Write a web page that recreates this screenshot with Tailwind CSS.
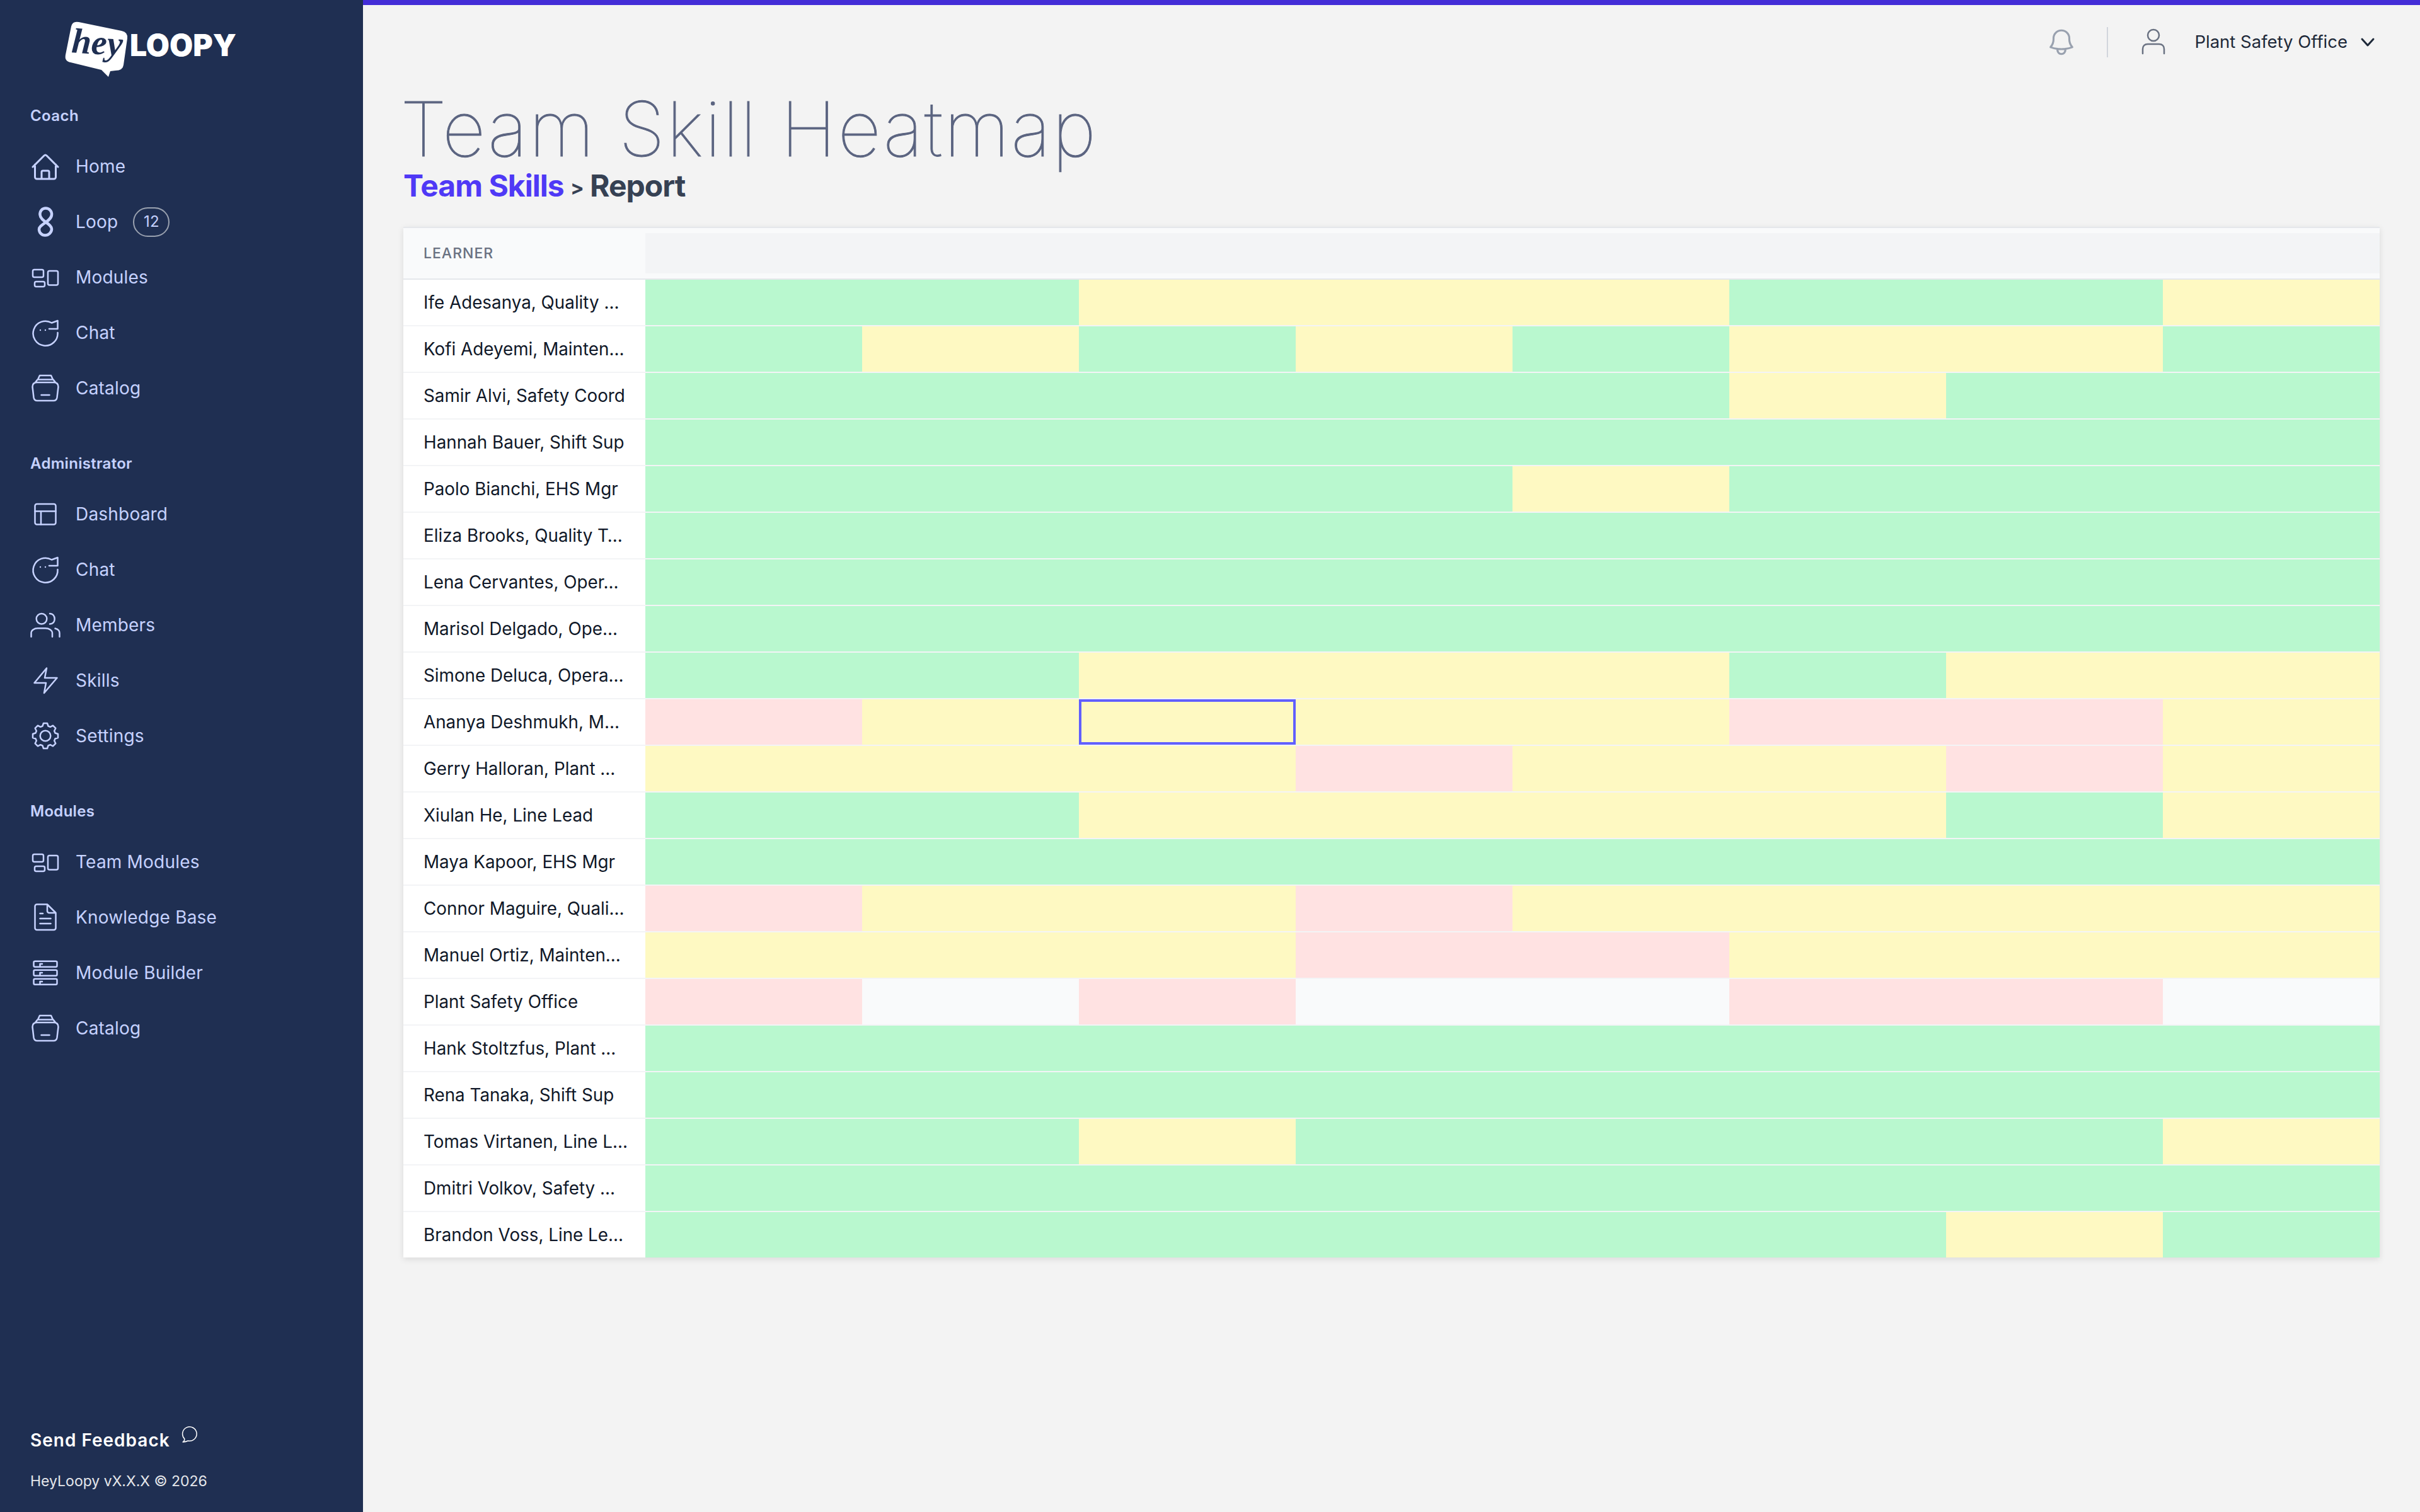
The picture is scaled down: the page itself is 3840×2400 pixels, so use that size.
<!DOCTYPE html>
<html lang="en">
<head>
    <meta charset="UTF-8">
    <title>Team Skill Heatmap</title>
    <script src="https://cdn.jsdelivr.net/npm/@tailwindcss/browser@4"></script>
</head>
<body class="bg-[#f3f3f3] [font-family:Inter,sans-serif] text-gray-800">
<div class="flex h-[2400px] w-[3840px] overflow-hidden">

    <!-- Sidebar -->
    <aside class="flex h-full w-[576px] shrink-0 flex-col bg-[#1f2f52] px-12 text-indigo-200">
        <!-- Logo -->
        <div class="relative ml-[47px] mt-[25px] h-[105px] w-[290px] shrink-0">
            <svg class="h-[105px] w-[120px]" viewBox="0 0 120 105" fill="#fff">
                <path d="M30 10 L98 24 Q108 26 107 36 L101 78 Q100 87 88 87 L80 88 L77 97 L66 86 L17 74 Q7 72 9 62 L18 17 Q20 8 30 10 Z"/>
            </svg>
            <span class="absolute left-[19px] top-[2px] rotate-[4deg] [font-family:'Liberation_Serif',serif] text-[56px] font-bold italic leading-[80px] text-[#1f2f52]">hey</span>
            <span class="absolute left-[111px] top-[21px] text-[48px] font-black leading-[52px] text-white">LOOPY</span>
        </div>

        <div class="mt-[34px] flex h-10 items-center text-[24px] font-semibold tracking-[0.4px]">Coach</div>
        <nav class="mt-4 flex flex-col">
            <a class="flex h-[88px] items-center gap-6 text-[28px] tracking-[0.2px]">
                <svg class="h-12 w-12 shrink-0" viewBox="0 0 48 48" fill="none" stroke="currentColor" stroke-width="3" stroke-linecap="round" stroke-linejoin="round"><path d="M4 25 L22 7 Q24 5 26 7 L44 25 M7.5 21 V41 A3 3 0 0 0 10.5 44 H37.5 A3 3 0 0 0 40.5 41 V21 M18 44 V33 A2 2 0 0 1 20 31 H28 A2 2 0 0 1 30 33 V44"/></svg>
                Home
            </a>
            <a class="flex h-[88px] items-center gap-6 text-[28px] tracking-[0.2px]">
                <svg class="h-12 w-12 shrink-0" viewBox="0 0 48 48" fill="none" stroke="currentColor" stroke-width="4.5" stroke-linecap="round" stroke-linejoin="round"><path d="M14 36 C14 28 33 24 34 13 C34.5 7 30 2.5 24.5 2.5 C19 2.5 15 7 15.5 13 C16 23 34 27 34 35.5 C34 41 29 45.5 23.5 45.5 C18 45.5 14 41 14 36 Z"/></svg>
                Loop
                <span class="flex h-[47px] w-[58px] items-center justify-center rounded-full border-2 border-gray-400 text-[24px]">12</span>
            </a>
            <a class="flex h-[88px] items-center gap-6 text-[28px] tracking-[0.2px]">
                <svg class="h-12 w-12 shrink-0" viewBox="0 0 48 48" fill="none" stroke="currentColor" stroke-width="2.5"><rect x="4" y="12" width="17" height="12" rx="2.5"/><rect x="28" y="14" width="16" height="22.5" rx="2.5"/><rect x="7" y="31" width="16" height="8" rx="2.5"/></svg>
                Modules
            </a>
            <a class="flex h-[88px] items-center gap-6 text-[28px] tracking-[0.2px]">
                <svg class="h-12 w-12 shrink-0" viewBox="0 0 48 48" fill="none" stroke="currentColor" stroke-width="2.5" stroke-linecap="round" stroke-linejoin="round"><path d="M43.5 18 V5 L34 8.5 A19.5 19.5 0 1 0 43.5 24 M43.5 18 H30"/><circle cx="16" cy="20" r="1.2" fill="currentColor" stroke="none"/><circle cx="24" cy="20" r="1.2" fill="currentColor" stroke="none"/></svg>
                Chat
            </a>
            <a class="flex h-[88px] items-center gap-6 text-[28px] tracking-[0.2px]">
                <svg class="h-12 w-12 shrink-0" viewBox="0 0 48 48" fill="none" stroke="currentColor" stroke-width="2.5" stroke-linecap="round" stroke-linejoin="round"><path d="M3.5 22 C3.5 17 7 15 11 15 H37 C41 15 44.5 17 44.5 22 L42.5 39 C42 42 40 44 37 44 H11 C8 44 6 42 5.5 39 Z M8 15 L11.5 10.5 H36.5 L40 15 M12 10.5 L15 4 H33 L36 10.5 M17.5 35 H30.5"/></svg>
                Catalog
            </a>
        </nav>

        <div class="mt-14 flex h-10 items-center text-[24px] font-semibold tracking-[0.3px]">Administrator</div>
        <nav class="mt-4 flex flex-col">
            <a class="flex h-[88px] items-center gap-6 text-[28px] tracking-[0.2px]">
                <svg class="h-12 w-12 shrink-0" viewBox="0 0 48 48" fill="none" stroke="currentColor" stroke-width="2.5" stroke-linecap="round" stroke-linejoin="round"><rect x="7.5" y="8" width="33" height="32.5" rx="3"/><path d="M7.5 19.5 H40.5 M17 19.5 V40.5"/></svg>
                Dashboard
            </a>
            <a class="flex h-[88px] items-center gap-6 text-[28px] tracking-[0.2px]">
                <svg class="h-12 w-12 shrink-0" viewBox="0 0 48 48" fill="none" stroke="currentColor" stroke-width="2.5" stroke-linecap="round" stroke-linejoin="round"><path d="M43.5 18 V5 L34 8.5 A19.5 19.5 0 1 0 43.5 24 M43.5 18 H30"/><circle cx="16" cy="20" r="1.2" fill="currentColor" stroke="none"/><circle cx="24" cy="20" r="1.2" fill="currentColor" stroke="none"/></svg>
                Chat
            </a>
            <a class="flex h-[88px] items-center gap-6 text-[28px] tracking-[0.2px]">
                <svg class="h-12 w-12 shrink-0" viewBox="0 0 48 48" fill="none" stroke="currentColor" stroke-width="2.5" stroke-linecap="round" stroke-linejoin="round"><circle cx="18" cy="14.3" r="8.3"/><path d="M31 6 C36 6 38.7 10 38.7 14.3 C38.7 19 36 22.5 31 22.5 M1.5 42.7 V37 C1.5 32.5 6 29.3 12 29.3 H24 C30 29.3 35 32.5 35 37 V42.7 M39.5 29.5 C43.5 30.5 46.5 33 46.5 37 V42.7"/></svg>
                Members
            </a>
            <a class="flex h-[88px] items-center gap-6 text-[28px] tracking-[0.2px]">
                <svg class="h-12 w-12 shrink-0" viewBox="0 0 48 48" fill="none" stroke="currentColor" stroke-width="2.5" stroke-linecap="round" stroke-linejoin="round"><path d="M6.5 28 L26 4.5 L23 20 H42.5 L22 44 L25 28 Z"/></svg>
                Skills
            </a>
            <a class="flex h-[88px] items-center gap-6 text-[28px] tracking-[0.2px]">
                <svg class="h-12 w-12 shrink-0" viewBox="0 0 48 48" fill="none" stroke="currentColor" stroke-width="2.5" stroke-linecap="round" stroke-linejoin="round"><g transform="translate(24 24)"><path d="M-4.5 -15.5 L-3 -20 L3 -20 L4.5 -15.5 L7.78 -14.14 L12.02 -16.26 L16.26 -12.02 L14.14 -7.78 L15.5 -4.5 L20 -3 L20 3 L15.5 4.5 L14.14 7.78 L16.26 12.02 L12.02 16.26 L7.78 14.14 L4.5 15.5 L3 20 L-3 20 L-4.5 15.5 L-7.78 14.14 L-12.02 16.26 L-16.26 12.02 L-14.14 7.78 L-15.5 4.5 L-20 3 L-20 -3 L-15.5 -4.5 L-14.14 -7.78 L-16.26 -12.02 L-12.02 -16.26 L-7.78 -14.14 Z"/><circle r="8.3"/></g></svg>
                Settings
            </a>
        </nav>

        <div class="mt-14 flex h-10 items-center text-[24px] font-semibold tracking-[0.3px]">Modules</div>
        <nav class="mt-4 flex flex-col">
            <a class="flex h-[88px] items-center gap-6 text-[28px] tracking-[0.2px]">
                <svg class="h-12 w-12 shrink-0" viewBox="0 0 48 48" fill="none" stroke="currentColor" stroke-width="2.5"><rect x="4" y="12" width="17" height="12" rx="2.5"/><rect x="28" y="14" width="16" height="22.5" rx="2.5"/><rect x="7" y="31" width="16" height="8" rx="2.5"/></svg>
                Team Modules
            </a>
            <a class="flex h-[88px] items-center gap-6 text-[28px] tracking-[0.2px]">
                <svg class="h-12 w-12 shrink-0" viewBox="0 0 48 48" fill="none" stroke="currentColor" stroke-width="2.5" stroke-linecap="round" stroke-linejoin="round"><path d="M10.5 3.5 H27 L40.5 17 V41 A3 3 0 0 1 37.5 44 H10.5 A3 3 0 0 1 7.5 41 V6.5 A3 3 0 0 1 10.5 3.5 Z M27 3.5 V14 A3 3 0 0 0 30 17 H40.5 M15.5 18 H20 M15.5 26 H32.5 M15.5 34 H32.5"/></svg>
                Knowledge Base
            </a>
            <a class="flex h-[88px] items-center gap-6 text-[28px] tracking-[0.2px]">
                <svg class="h-12 w-12 shrink-0" viewBox="0 0 48 48" fill="none" stroke="currentColor" stroke-width="2.5" stroke-linecap="round" stroke-linejoin="round"><rect x="5.5" y="5.7" width="37" height="9" rx="2"/><rect x="5.5" y="19.7" width="37" height="9" rx="2"/><rect x="5.5" y="33.7" width="37" height="9" rx="2"/><path d="M15.5 10 V14.7 M15.5 24 V28.7 M15.5 38 V42.7 M15.5 10 H19 M15.5 24 H19 M15.5 38 H19"/></svg>
                Module Builder
            </a>
            <a class="flex h-[88px] items-center gap-6 text-[28px] tracking-[0.2px]">
                <svg class="h-12 w-12 shrink-0" viewBox="0 0 48 48" fill="none" stroke="currentColor" stroke-width="2.5" stroke-linecap="round" stroke-linejoin="round"><path d="M3.5 22 C3.5 17 7 15 11 15 H37 C41 15 44.5 17 44.5 22 L42.5 39 C42 42 40 44 37 44 H11 C8 44 6 42 5.5 39 Z M8 15 L11.5 10.5 H36.5 L40 15 M12 10.5 L15 4 H33 L36 10.5 M17.5 35 H30.5"/></svg>
                Catalog
            </a>
        </nav>

        <!-- Footer -->
        <div class="mt-auto pb-[29px]">
            <div class="flex h-11 items-center text-[28px] font-semibold tracking-[1px] text-white">
                Send Feedback
                <svg class="mb-[18px] ml-[17px] h-[30px] w-[30px]" viewBox="0 0 24 24" fill="none" stroke="currentColor" stroke-width="1.2" stroke-linecap="round" stroke-linejoin="round"><path d="M2.5 21.5 C4.2 20.5 4.8 19 4.6 17.5 A9 9 0 1 1 9 20 C7 21 4.5 21.5 2.5 21.5 Z"/></svg>
            </div>
            <div class="mt-[23px] flex h-10 items-center text-[23px] text-gray-200">HeyLoopy vX.X.X © 2026</div>
        </div>
    </aside>

    <!-- Main -->
    <main class="flex h-full min-w-0 flex-1 flex-col border-t-8 border-indigo-700 px-16">
        <header class="flex h-[118px] shrink-0 items-center justify-end">
            <svg class="h-[50px] w-[50px] text-gray-400" viewBox="0 0 24 24" fill="none" stroke="currentColor" stroke-width="1.5" stroke-linecap="round" stroke-linejoin="round"><path d="M14.857 17.082a23.848 23.848 0 0 0 5.454-1.31A8.967 8.967 0 0 1 18 9.75V9A6 6 0 0 0 6 9v.75a8.967 8.967 0 0 1-2.312 6.022c1.733.64 3.56 1.085 5.455 1.31m5.714 0a24.255 24.255 0 0 1-5.714 0m5.714 0a3 3 0 1 1-5.714 0"/></svg>
            <div class="ml-[47px] mr-[52px] h-12 w-0.5 bg-gray-300"></div>
            <svg class="h-[44px] w-[40px] text-gray-500" viewBox="0 0 40 44" fill="none" stroke="currentColor" stroke-width="2.5" stroke-linecap="round"><circle cx="20" cy="11" r="9"/><path d="M3 40 V33 C3 28 6 25 11 25 H29 C34 25 37 28 37 33 V40"/></svg>
            <span class="ml-[45px] text-[27.5px]">Plant Safety Office</span>
            <svg class="ml-5 mr-[7px] h-[24px] w-[24px]" viewBox="0 0 24 24" fill="none" stroke="currentColor" stroke-width="3" stroke-linecap="round" stroke-linejoin="round"><path d="M3 7 L12 17 L21 7"/></svg>
        </header>

        <h1 class="ml-[-5px] mt-[19px] text-[120px] font-thin leading-none tracking-[2.3px] text-[#5b6480] [-webkit-text-stroke:1px_#5b6480]">Team Skill Heatmap</h1>
        <p class="mt-[6px] text-[48px] font-bold leading-none tracking-[-1px] text-gray-700"><a class="text-indigo-600">Team Skills</a> <span class="align-[3px] text-[32px]">&gt;</span> Report</p>

        <!-- Heatmap -->
        <div id="heatmap" class="mt-[41px] w-[3136px] bg-white shadow-[0_3px_10px_rgba(0,0,0,0.1)]">
            <div class="grid grid-cols-[384px_repeat(8,344px)] border-y-2 border-t-gray-200 border-b-gray-200 bg-gray-50">
                <div class="flex h-20 items-center pl-8 text-[23px] font-medium tracking-[1px] text-gray-500 uppercase">Learner</div>
                <div class="col-span-8 my-2 h-16 bg-gray-100"></div>
            </div>
        </div>
    </main>
</div>

<script>
    var cellClass = {
        G: "bg-green-200",
        Y: "bg-yellow-100",
        R: "bg-red-100",
        W: "bg-gray-50",
        S: "bg-yellow-100 border-4 border-indigo-500"
    };
    var rows = [
        ["Ife Adesanya, Quality …", "GGYYYGGY"],
        ["Kofi Adeyemi, Mainten…", "GYGYGYYG"],
        ["Samir Alvi, Safety Coord", "GGGGGYGG"],
        ["Hannah Bauer, Shift Sup", "GGGGGGGG"],
        ["Paolo Bianchi, EHS Mgr", "GGGGYGGG"],
        ["Eliza Brooks, Quality T…", "GGGGGGGG"],
        ["Lena Cervantes, Oper…", "GGGGGGGG"],
        ["Marisol Delgado, Ope…", "GGGGGGGG"],
        ["Simone Deluca, Opera…", "GGYYYGYY"],
        ["Ananya Deshmukh, M…", "RYSYYRRY"],
        ["Gerry Halloran, Plant …", "YYYRYYRY"],
        ["Xiulan He, Line Lead", "GGYYYYGY"],
        ["Maya Kapoor, EHS Mgr", "GGGGGGGG"],
        ["Connor Maguire, Quali…", "RYYRYYYY"],
        ["Manuel Ortiz, Mainten…", "YYYRRYYY"],
        ["Plant Safety Office", "RWRWWRRW"],
        ["Hank Stoltzfus, Plant …", "GGGGGGGG"],
        ["Rena Tanaka, Shift Sup", "GGGGGGGG"],
        ["Tomas Virtanen, Line L…", "GGYGGGGY"],
        ["Dmitri Volkov, Safety …", "GGGGGGGG"],
        ["Brandon Voss, Line Le…", "GGGGGGYG"]
    ];
    var html = "";
    rows.forEach(function (row, i) {
        var border = i < rows.length - 1 ? "border-b-2 border-gray-100" : "";
        html += '<div class="grid grid-cols-[384px_repeat(8,344px)] ' + border + '">';
        html += '<div class="flex h-[72px] items-center pl-8 pt-px"><span class="whitespace-nowrap text-[27.8px] text-gray-900">' + row[0] + '</span></div>';
        row[1].split("").forEach(function (c) {
            html += '<div class="h-[72px] ' + cellClass[c] + '"></div>';
        });
        html += '</div>';
    });
    document.getElementById("heatmap").insertAdjacentHTML("beforeend", html);
</script>
</body>
</html>
